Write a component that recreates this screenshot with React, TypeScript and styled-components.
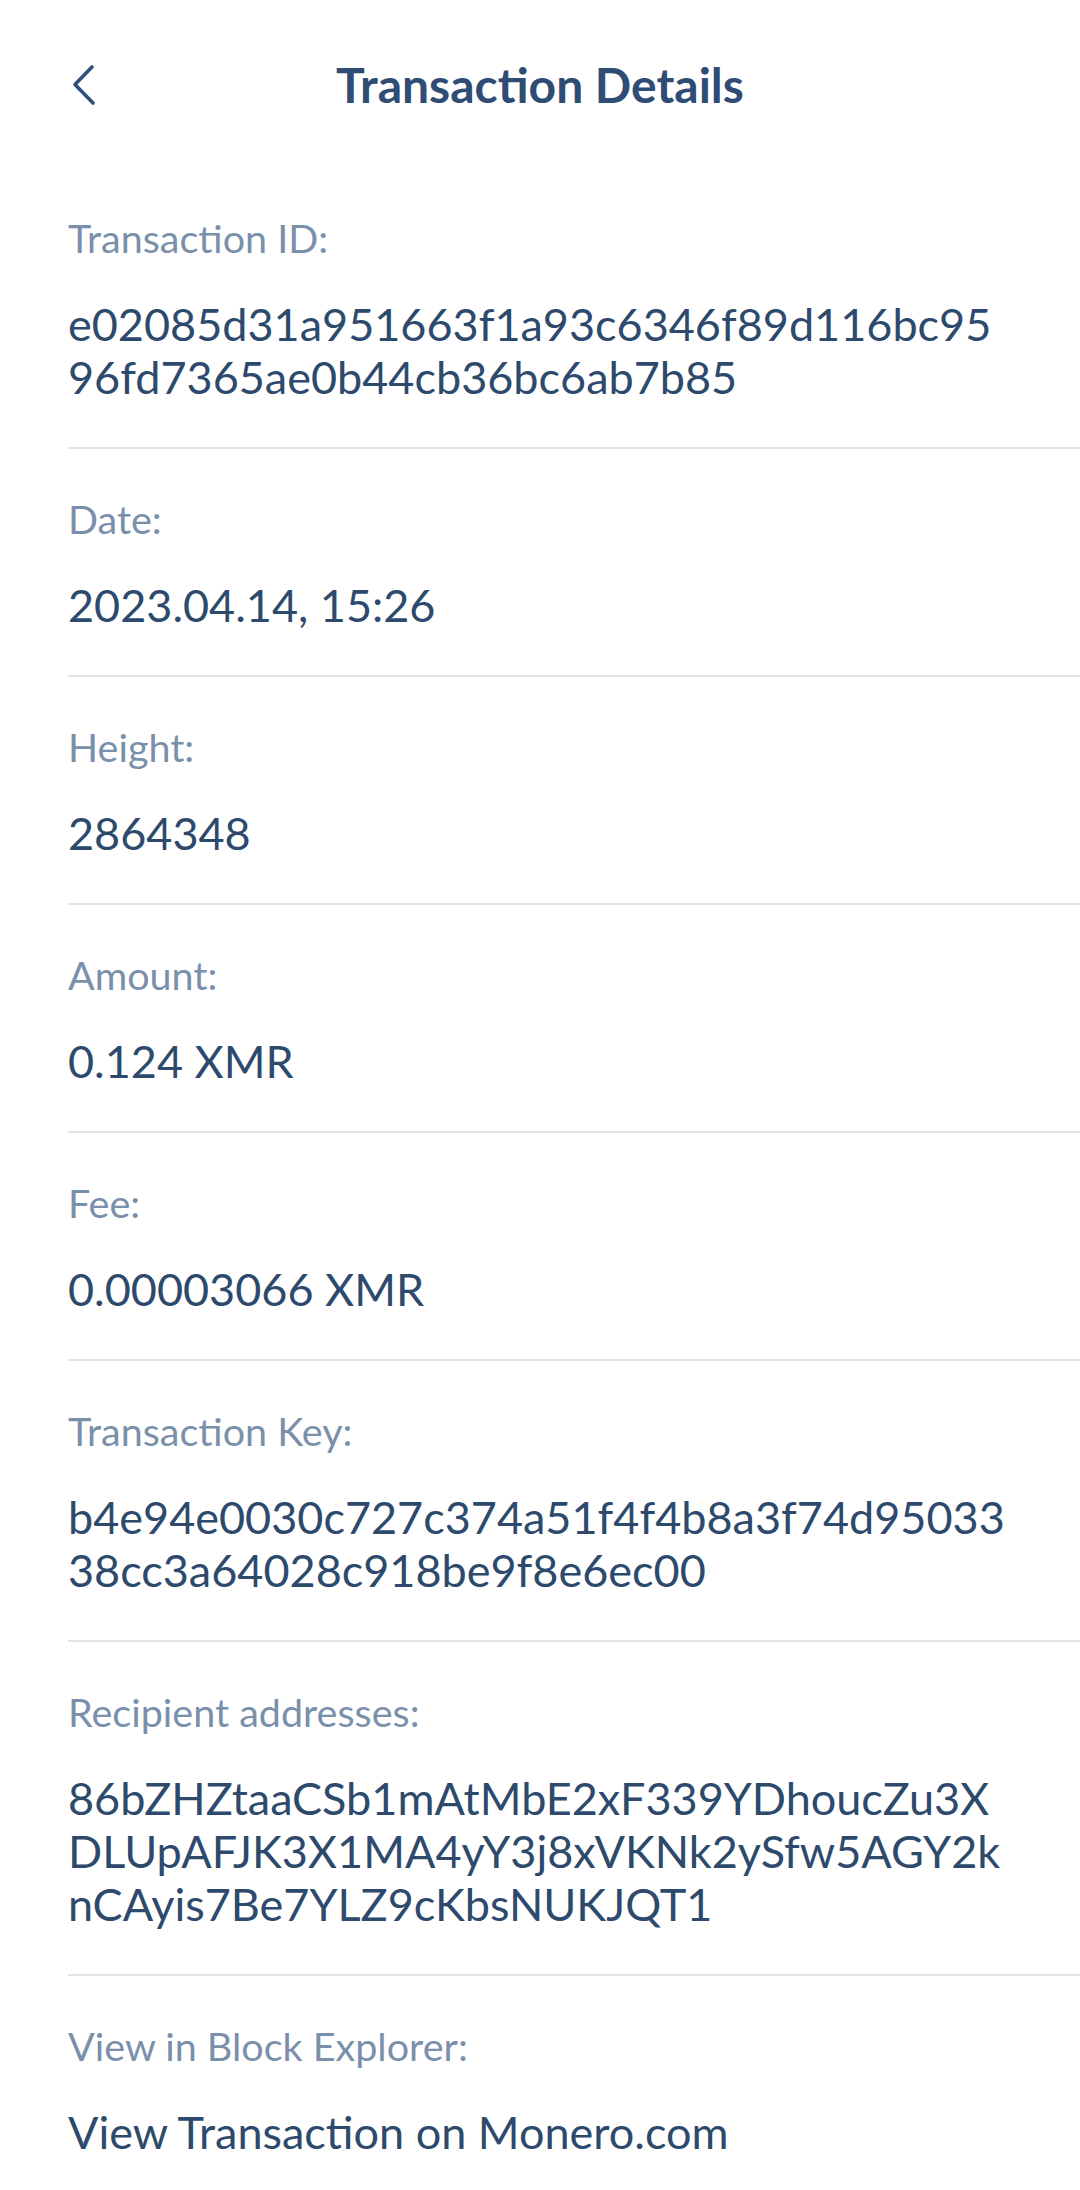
import styled, { createGlobalStyle } from "styled-components";

const GlobalStyle = createGlobalStyle`
  html, body {
    margin: 0;
    padding: 0;
    background: #ffffff;
  }
  body {
    font-family: Lato, "Open Sans", sans-serif;
    -webkit-font-smoothing: antialiased;
  }
`;

const details = [
  {
    label: "Transaction ID:",
    value: "e02085d31a951663f1a93c6346f89d116bc9596fd7365ae0b44cb36bc6ab7b85",
  },
  { label: "Date:", value: "2023.04.14, 15:26" },
  { label: "Height:", value: "2864348" },
  { label: "Amount:", value: "0.124 XMR" },
  { label: "Fee:", value: "0.00003066 XMR" },
  {
    label: "Transaction Key:",
    value: "b4e94e0030c727c374a51f4f4b8a3f74d9503338cc3a64028c918be9f8e6ec00",
  },
  {
    label: "Recipient addresses:",
    value:
      "86bZHZtaaCSb1mAtMbE2xF339YDhoucZu3XDLUpAFJK3X1MA4yY3j8xVKNk2ySfw5AGY2knCAyis7Be7YLZ9cKbsNUKJQT1",
  },
  { label: "View in Block Explorer:", value: "View Transaction on Monero.com" },
];

export default function App() {
  return (
    <>
      <GlobalStyle />
      <Page>
        <Header>
          <BackButton aria-label="Back">
            <svg width="30" height="44" viewBox="0 0 30 44" fill="none">
              <path
                d="M21 4 L4 21.5 L22 40"
                stroke="#30507c"
                strokeWidth="3.6"
                strokeLinecap="round"
                strokeLinejoin="round"
              />
            </svg>
          </BackButton>
          <Title>Transaction Details</Title>
          <span />
        </Header>
        <List>
          {details.map((item, i) => (
            <Section key={item.label} last={i === details.length - 1}>
              <Label>{item.label}</Label>
              <Value>{item.value}</Value>
            </Section>
          ))}
        </List>
      </Page>
    </>
  );
}

const Page = styled.div`
  width: 1080px;
  min-height: 2190px;
  background: #ffffff;
`;

const Header = styled.header`
  display: grid;
  grid-template-columns: 1fr auto 1fr;
  align-items: center;
  height: 168px;
  padding: 55px 0 53px;
  box-sizing: border-box;
`;

const BackButton = styled.button`
  justify-self: start;
  display: flex;
  align-items: center;
  margin-left: 71px;
  padding: 0;
  border: none;
  background: none;
  cursor: pointer;
`;

const Title = styled.h1`
  margin: 0;
  font-size: 48px;
  line-height: 60px;
  font-weight: 700;
  color: #2f4c74;
`;

const List = styled.div`
  display: flex;
  flex-direction: column;
  padding-left: 68px;
`;

const Section = styled.div<{ last?: boolean }>`
  display: flex;
  flex-direction: column;
  gap: 36px;
  padding: 46px 68px 43px 0;
  border-bottom: ${(p) => (p.last ? "none" : "2px solid #e3e3e3")};
`;

const Label = styled.div`
  font-size: 39.5px;
  line-height: 48px;
  color: #7a90aa;
`;

const Value = styled.div`
  font-size: 45px;
  line-height: 53px;
  color: #2d4a6d;
  word-break: break-all;
`;
